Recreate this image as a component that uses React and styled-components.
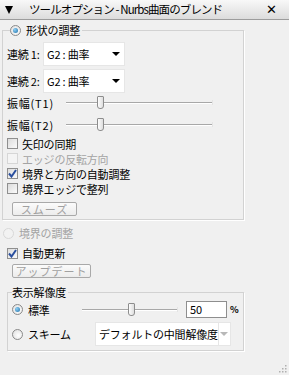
import styled, { createGlobalStyle } from "styled-components";

const GlobalStyle = createGlobalStyle`
  html, body {
    margin: 0;
    padding: 0;
    background: #f0f0f0;
  }
  body {
    font-family: "Noto Sans CJK JP", "Noto Sans", sans-serif;
    font-size: 11px;
    line-height: 14px;
    color: #000;
  }
`;

const Window = styled.div`
  width: 289px;
  height: 375px;
  background: #f0f0f0;
  position: relative;
  overflow: hidden;
  display: flex;
  flex-direction: column;
`;

const TitleBar = styled.div`
  height: 20px;
  box-sizing: border-box;
  display: flex;
  align-items: center;
  padding: 0 12px 0 5px;
  background: linear-gradient(#f8f8f8, #dcdcdc);
  border-bottom: 1px solid #9c9c9c;
  font-size: 11.5px;
  letter-spacing: -0.9px;
  line-height: 19px;
`;

const Collapse = styled.span`
  width: 0;
  height: 0;
  border-left: 4.5px solid transparent;
  border-right: 4.5px solid transparent;
  border-top: 8px solid #000;
  margin-right: 16px;
`;

const Title = styled.span`
  flex: 1;
  white-space: pre;
`;

const Close = styled.span`
  font-family: "DejaVu Sans", sans-serif;
  font-size: 13px;
  font-weight: bold;
  letter-spacing: 0;
`;

const Body = styled.div`
  display: flex;
  flex-direction: column;
  padding: 3px 0 0 2px;
  letter-spacing: -0.2px;
`;

const GroupBox = styled.fieldset`
  margin: ${(p) => p.$margin || "0"};
  width: ${(p) => p.$width}px;
  box-sizing: border-box;
  min-width: 0;
  border: 1px solid #d2d2d2;
  box-shadow: 1px 1px 0 #fff;
  padding: ${(p) => p.$padding};
  display: flex;
  flex-direction: column;
`;

const Legend = styled.legend`
  display: flex;
  align-items: center;
  height: 14px;
  line-height: 14px;
  padding: 0 2px 0 0;
  margin-left: ${(p) => p.$offset || 0}px;
`;

const Row = styled.div`
  display: flex;
  align-items: center;
  height: ${(p) => p.$h}px;
  line-height: 14px;
  margin-top: ${(p) => p.$mt || 0}px;
  margin-left: ${(p) => p.$ml || 0}px;
  color: ${(p) => (p.$disabled ? "#a3a3a3" : "#000")};
  white-space: nowrap;
`;

const Label = styled.span`
  width: ${(p) => p.$w}px;
  flex: none;
  white-space: nowrap;
  letter-spacing: ${(p) => (p.$wide ? "0.8px" : "inherit")};
`;

const Select = styled.div`
  width: ${(p) => p.$w}px;
  height: 24px;
  box-sizing: border-box;
  background: #fff;
  border: 1px solid #e6e6e6;
  display: flex;
  align-items: center;
  padding-left: 3px;
  white-space: nowrap;
`;

const SelectText = styled.span`
  flex: 1;
`;

const Arrow = styled.span`
  width: 0;
  height: 0;
  border-left: 4px solid transparent;
  border-right: 4px solid transparent;
  border-top: 4px solid ${(p) => (p.$light ? "#b8b8b8" : "#000")};
  margin-right: ${(p) => p.$mr}px;
`;

const ArrowCell = styled.span`
  align-self: stretch;
  width: 17px;
  border-left: 1px solid #e6e6e6;
  display: flex;
  align-items: center;
  justify-content: center;
`;

const Slider = styled.div`
  position: relative;
  width: ${(p) => p.$w}px;
  height: 14px;
  flex: none;
`;

const Track = styled.div`
  position: absolute;
  left: 0;
  right: 0;
  top: 6px;
  height: 1px;
  background: #a8a8a8;
  border-bottom: 1px solid #fff;
  &::after {
    content: "";
    position: absolute;
    right: -1px;
    top: -2px;
    width: 1px;
    height: 5px;
    background: #e4e4e4;
  }
`;

const Thumb = styled.div`
  position: absolute;
  top: 0;
  width: 5px;
  height: 11px;
  border: 1px solid #8d8d8d;
  border-radius: 1px 1px 3px 3px;
  background: linear-gradient(90deg, #fdfdfd, #dedede);
`;

const CheckBox = styled.span`
  width: 11px;
  height: 11px;
  box-sizing: border-box;
  flex: none;
  border: 1px solid ${(p) => (p.$disabled ? "#d6d6d6" : "#8f8f8f")};
  background: ${(p) =>
    p.$disabled ? "#f4f4f4" : "linear-gradient(135deg, #dcdcdc, #fafafa)"};
  margin-right: 4px;
  display: flex;
  align-items: center;
  justify-content: center;
`;

const Radio = styled.span`
  width: 11px;
  height: 11px;
  box-sizing: border-box;
  flex: none;
  border-radius: 50%;
  border: 1px solid ${(p) => (p.$disabled ? "#d8d8d8" : "#8a8a8a")};
  background: ${(p) =>
    p.$disabled ? "#f2f2f2" : "radial-gradient(circle at 60% 60%, #fff, #dcdcdc)"};
  margin-right: 5px;
  display: flex;
  align-items: center;
  justify-content: center;
  &::after {
    content: "";
    display: ${(p) => (p.$on ? "block" : "none")};
    width: 5px;
    height: 5px;
    border-radius: 50%;
    background: radial-gradient(circle at 35% 35%, #8fd0f5, #1d6fa8);
  }
`;

const Button = styled.div`
  width: ${(p) => p.$w}px;
  height: 14px;
  box-sizing: border-box;
  margin: ${(p) => p.$margin};
  border: 1px solid #a9a9a9;
  border-radius: 2px;
  background: linear-gradient(#fbfbfb, #ececec);
  color: #a0a0a0;
  line-height: 12px;
  letter-spacing: 1px;
  display: flex;
  align-items: center;
  justify-content: center;
`;

const Field = styled.div`
  width: 41px;
  height: 17px;
  box-sizing: border-box;
  border: 1px solid #8e8e8e;
  background: #fff;
  padding-left: 3px;
  line-height: 15px;
  margin-left: 9px;
  flex: none;
`;

const Percent = styled.span`
  margin-left: 3px;
  font-size: 9px;
  font-weight: bold;
`;

const Grip = styled.svg`
  position: absolute;
  right: 2px;
  bottom: 2px;
`;

const Check = () => (
  <svg width="9" height="9" viewBox="0 0 9 9">
    <path d="M1 4.5 L3.5 7.5 L8 1" stroke="#2a4f9e" strokeWidth="2" fill="none" />
  </svg>
);

const SliderControl = ({ width, pos }) => (
  <Slider $w={width}>
    <Track />
    <Thumb style={{ left: pos }} />
  </Slider>
);

const CheckRow = ({ checked, disabled, children, mt, h = 15, ml }) => (
  <Row $h={h} $mt={mt} $ml={ml} $disabled={disabled}>
    <CheckBox $disabled={disabled}>{checked && <Check />}</CheckBox>
    {children}
  </Row>
);

export default function App() {
  return (
    <Window>
      <GlobalStyle />
      <TitleBar>
        <Collapse />
        <Title>ツールオプション - Nurbs曲面のブレンド</Title>
        <Close>✕</Close>
      </TitleBar>
      <Body>
        <GroupBox $width={242} $padding="5px 4px 3px 4px">
          <Legend $offset={3}>
            <Radio $on />
            形状の調整
          </Legend>
          <Row $h={24}>
            <Label $w={36}>連続 1:</Label>
            <Select $w={82}>
              <SelectText>G2 : 曲率</SelectText>
              <Arrow $mr={4} />
            </Select>
          </Row>
          <Row $h={24} $mt={3}>
            <Label $w={36}>連続 2:</Label>
            <Select $w={82}>
              <SelectText>G2 : 曲率</SelectText>
              <Arrow $mr={4} />
            </Select>
          </Row>
          <Row $h={16} $mt={2}>
            <Label $w={59} $wide>振幅(T1)</Label>
            <SliderControl width={146} pos={31} />
          </Row>
          <Row $h={16} $mt={6}>
            <Label $w={59} $wide>振幅(T2)</Label>
            <SliderControl width={146} pos={31} />
          </Row>
          <CheckRow mt={3}>矢印の同期</CheckRow>
          <CheckRow disabled>エッジの反転方向</CheckRow>
          <CheckRow checked>境界と方向の自動調整</CheckRow>
          <CheckRow>境界エッジで整列</CheckRow>
          <Button $w={65} $margin="6px 0 0 5px">スムーズ</Button>
        </GroupBox>

        <Row $h={14} $mt={6} $ml={1} $disabled>
          <Radio $disabled />
          境界の調整
        </Row>
        <CheckRow checked mt={6} h={14} ml={5}>
          自動更新
        </CheckRow>
        <Button $w={79} $margin="4px 0 0 10px">アップデート</Button>

        <GroupBox $width={237} $margin="7px 0 0 5px" $padding="2px 4px 4px 4px">
          <Legend $offset={0}>表示解像度</Legend>
          <Row $h={17}>
            <Radio $on />
            <Label $w={54}>標準</Label>
            <SliderControl width={95} pos={46} />
            <Field>50</Field>
            <Percent>%</Percent>
          </Row>
          <Row $h={24} $mt={4}>
            <Radio />
            <Label $w={67}>スキーム</Label>
            <Select $w={136}>
              <SelectText>デフォルトの中間解像度</SelectText>
              <ArrowCell>
                <Arrow $light $mr={0} />
              </ArrowCell>
            </Select>
          </Row>
        </GroupBox>
      </Body>
      <Grip width="9" height="9" viewBox="0 0 9 9">
        {[
          [7, 1],
          [7, 4],
          [4, 4],
          [7, 7],
          [4, 7],
          [1, 7],
        ].map(([x, y]) => (
          <rect key={`${x}-${y}`} x={x} y={y} width="1.5" height="1.5" fill="#b0b0b0" />
        ))}
      </Grip>
    </Window>
  );
}
